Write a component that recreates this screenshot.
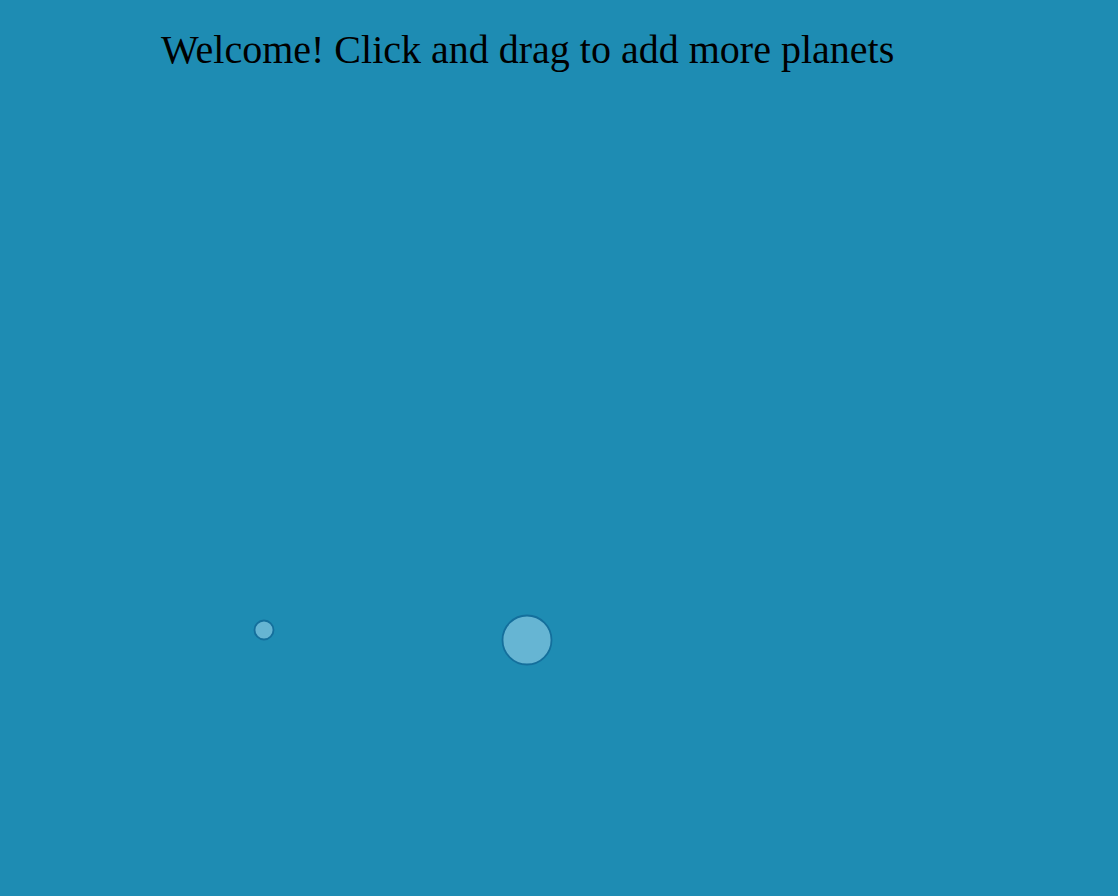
export default function App() {
  return (
    <div className="relative h-screen w-full overflow-hidden bg-[#1e8cb3]">
      <h1
        className="pl-[161px] pt-[24px] text-[40px] leading-[52px] text-black"
        style={{ fontFamily: '"Liberation Serif", "Times New Roman", serif' }}
      >
        Welcome! Click and drag to add more planets
      </h1>
      <svg className="absolute left-0 top-0 h-full w-full" aria-hidden="true">
        <circle cx="264" cy="630" r="9.5" fill="#66b5d3" stroke="#146f9c" strokeWidth="1.8" />
        <circle cx="527" cy="640" r="24.5" fill="#66b5d3" stroke="#146f9c" strokeWidth="1.8" />
      </svg>
    </div>
  )
}
